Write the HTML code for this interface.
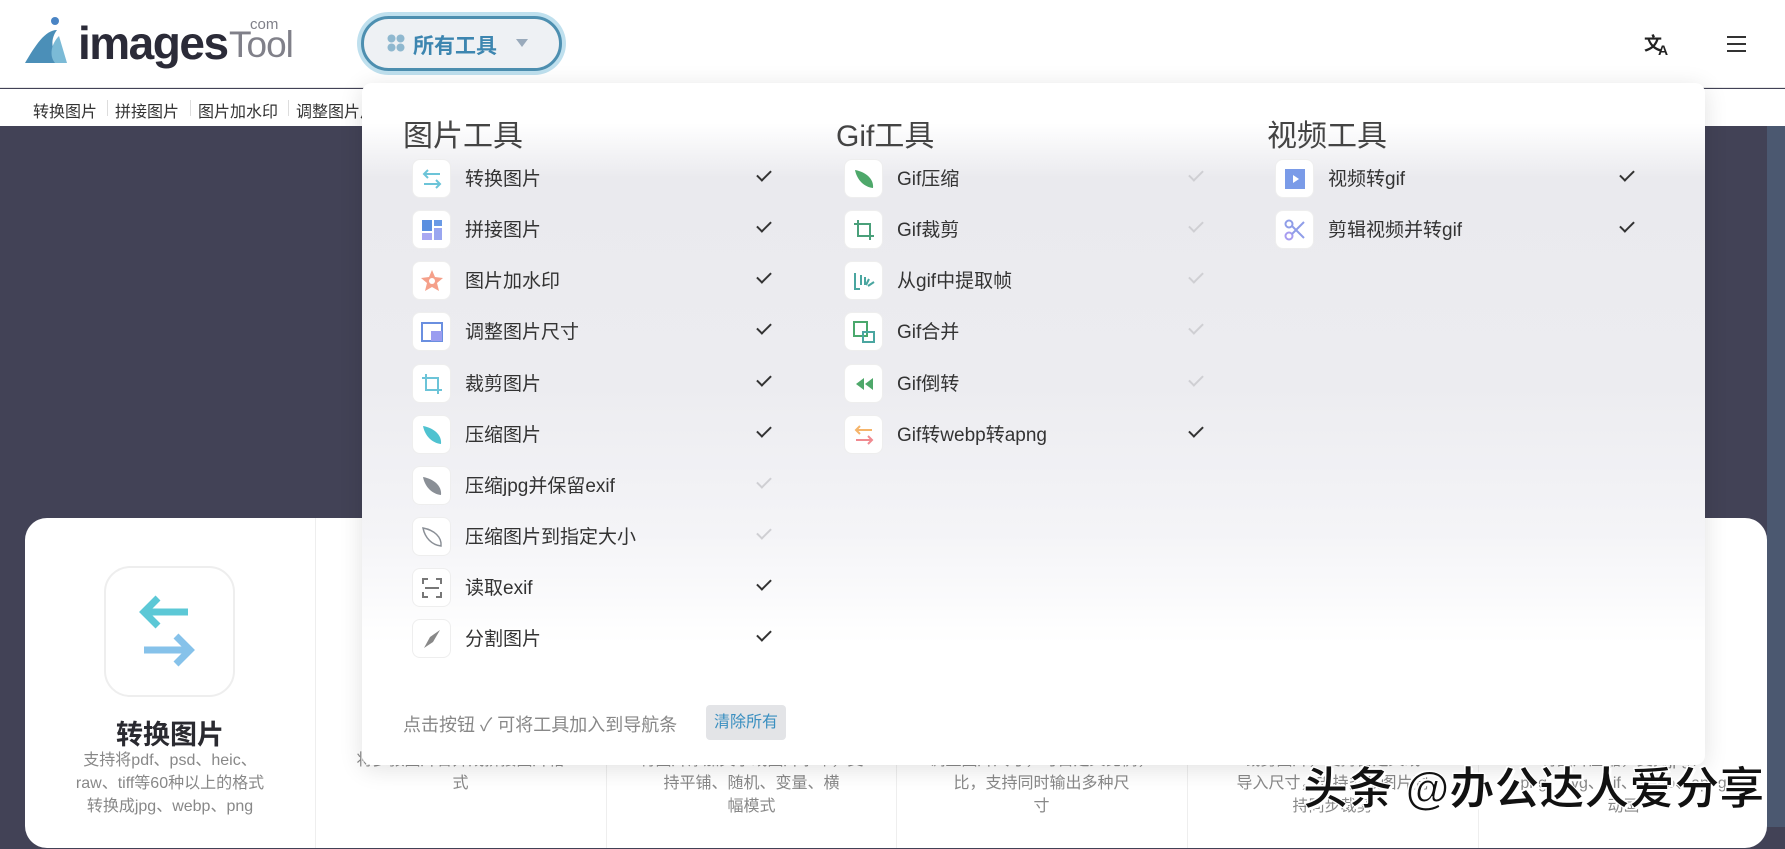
<!DOCTYPE html>
<html><head><meta charset="utf-8"><style>
*{margin:0;padding:0;box-sizing:border-box}
body{width:1785px;height:827px;overflow:hidden;position:relative;background:#424256;font-family:"Liberation Sans","Noto Sans CJK SC",sans-serif;color:#333}
.hdr{position:absolute;left:0;top:0;width:1785px;height:88px;background:#fff;border-bottom:1px solid #e6e6e6}
.sub{position:absolute;left:0;top:89px;width:1785px;height:37px;background:#fff;font-size:16px;color:#333}
.sub span{position:absolute;top:9px}
.sub i{position:absolute;top:11px;width:1px;height:16px;background:#ddd}
.btn{position:absolute;left:361px;top:16px;width:201px;height:55px;border-radius:28px;border:3px solid #4d8fb0;box-shadow:0 0 0 4px #bfe0ee;background:#eef1f4;color:#3d86b0;font-weight:bold;font-size:21px}
.card{position:absolute;left:25px;top:518px;width:1742px;height:330px;background:#fff;border-radius:22px}
.col{position:absolute;top:0;height:330px;width:291px;text-align:center;font-size:16px;color:#888;line-height:23px}
.panel{position:absolute;left:362px;top:83px;width:1343px;height:682px;border-radius:10px;background:linear-gradient(#fff 0,#fff 40px,#eaeaee 95px,#ececf0 300px,#f4f4f7 450px,#fff 560px);box-shadow:0 4px 24px rgba(0,0,0,.12)}
.h{position:absolute;top:28px;font-size:30px;color:#444;font-weight:normal}
.row{position:absolute;height:40px;width:400px}
.ib{position:absolute;left:0;top:0;width:39px;height:39px;background:#fff;border-radius:8px;border:1px solid #eee}
.ib svg{position:absolute;left:7px;top:7px}
.t{position:absolute;left:53px;top:5px;font-size:19px;color:#333;white-space:nowrap}
.ck{position:absolute;top:11px;left:345px;width:14px;height:8px;border-left:2px solid #333;border-bottom:2px solid #333;transform:rotate(-45deg)}
.ck.l{border-color:#cfcfd3}
</style></head><body>
<div class="hdr">
 <svg style="position:absolute;left:25px;top:16px" width="60" height="47" viewBox="0 0 60 47"><circle cx="30" cy="5" r="4" fill="#4a84c4"/><path d="M0 47 C10 30 20 14 32 14 C26 22 24 34 38 47Z" fill="#4b8fb8"/><path d="M30 47 C24 40 26 28 34 20 L42 47Z" fill="#7bbad6"/></svg>
 <div style="position:absolute;left:78px;top:16px;font-size:46px;font-weight:bold;color:#2b2b38;letter-spacing:-1.5px">images</div>
 <div style="position:absolute;left:229px;top:24px;font-size:37px;color:#808089;letter-spacing:-1px">Tool</div>
 <div style="position:absolute;left:250px;top:16px;font-size:15px;color:#808089">com</div>
 <div class="btn"><svg style="position:absolute;left:23px;top:15px" width="18" height="18"><circle cx="4.5" cy="4.5" r="4" fill="#8fb8cf"/><circle cx="13.5" cy="4.5" r="4" fill="#8fb8cf"/><circle cx="4.5" cy="13.5" r="4" fill="#8fb8cf"/><circle cx="13.5" cy="13.5" r="4" fill="#8fb8cf"/></svg><span style="position:absolute;left:49px;top:11px">所有工具</span><span style="position:absolute;left:152px;top:20px;border:6px solid transparent;border-top:8px solid #9ab;"></span></div>
 <div style="position:absolute;left:1644px;top:30px;font-size:18px;font-weight:bold;color:#222">文<span style="font-size:14px;position:relative;top:5px;left:-4px">A</span></div>
 <div style="position:absolute;left:1727px;top:36px;width:19px;height:2px;background:#333;box-shadow:0 7px 0 #333,0 14px 0 #333"></div>
</div>
<div class="sub"><span style="left:33px">转换图片</span><i style="left:107px"></i><span style="left:115px">拼接图片</span><i style="left:190px"></i><span style="left:198px">图片加水印</span><i style="left:288px"></i><span style="left:296px">调整图片尺寸</span></div>
<div style="position:absolute;left:1767px;top:126px;width:18px;height:701px;background:#4b5870"></div>
<div class="card">
 <div style="position:absolute;left:79px;top:48px;width:131px;height:131px;border:2px solid #eee;border-radius:26px">
  <svg width="131" height="131" viewBox="0 0 131 131"><path d="M40 44 H82 M52 30 L38 44 L52 58" stroke="#5cc8d6" stroke-width="7" fill="none"/><path d="M38 82 H84 M70 68 L84 82 L70 96" stroke="#86c2ea" stroke-width="7" fill="none"/></svg></div>
 <div style="position:absolute;left:0;width:290px;top:195px;text-align:center;font-size:27px;font-weight:bold;color:#2a2a30">转换图片</div>
 <div style="position:absolute;left:0;width:290px;top:231px;text-align:center;font-size:16px;color:#888;line-height:23px">支持将pdf、psd、heic、<br>raw、tiff等60种以上的格式<br>转换成jpg、webp、png</div>
 <div class="col" style="left:290px;top:231px;height:100px">将多张图片合并成拼接图片格<br>式</div>
 <div class="col" style="left:581px;top:231px;height:100px">将图片添加文字或图片水印，支<br>持平铺、随机、变量、横<br>幅模式</div>
 <div class="col" style="left:871px;top:231px;height:100px">调整图片尺寸，可自定义比例，<br>比，支持同时输出多种尺<br>寸</div>
 <div class="col" style="left:1162px;top:231px;height:100px">裁剪图片，支持自定义或<br>导入尺寸，支持多张图片同<br>持同步裁剪</div>
 <div class="col" style="left:1453px;top:231px;height:100px">将图片压缩，支持jpg、<br>png、svg、gif、webp、apng<br>动画</div>
 <div style="position:absolute;left:290px;top:0;width:1px;height:330px;background:#eee"></div>
 <div style="position:absolute;left:581px;top:0;width:1px;height:330px;background:#eee"></div>
 <div style="position:absolute;left:871px;top:0;width:1px;height:330px;background:#eee"></div>
 <div style="position:absolute;left:1162px;top:0;width:1px;height:330px;background:#eee"></div>
 <div style="position:absolute;left:1453px;top:0;width:1px;height:330px;background:#eee"></div>
</div>
<div class="panel">
 <div class="h" style="left:41px">图片工具</div>
 <div class="h" style="left:474px">Gif工具</div>
 <div class="h" style="left:905px">视频工具</div>

 <div class="row" style="left:50px;top:76px"><div class="ib"><svg width="24" height="24"><path d="M4 7H20M8 3L4 7L8 11M4 17H20M16 13L20 17L16 21" stroke="#6cc4d8" stroke-width="2" fill="none"/></svg></div><div class="t">转换图片</div><div class="ck"></div></div>
 <div class="row" style="left:50px;top:127px"><div class="ib"><svg width="24" height="24"><rect x="2" y="2" width="10" height="11" fill="#5a8fe0"/><rect x="14" y="2" width="8" height="6" fill="#6a9ae6"/><rect x="14" y="10" width="8" height="12" fill="#9aa6f0"/><rect x="2" y="15" width="10" height="7" fill="#a9a8f2"/></svg></div><div class="t">拼接图片</div><div class="ck"></div></div>
 <div class="row" style="left:50px;top:178px"><div class="ib"><svg width="24" height="24"><path d="M12 1L15 8L23 9L17 14L19 22L12 18L5 22L7 14L1 9L9 8Z" fill="#f5a08a"/><circle cx="12" cy="12" r="3" fill="#fff"/></svg></div><div class="t">图片加水印</div><div class="ck"></div></div>
 <div class="row" style="left:50px;top:229px"><div class="ib"><svg width="24" height="24"><rect x="2" y="3" width="20" height="18" stroke="#6a8fe0" stroke-width="2" fill="none"/><rect x="11" y="11" width="11" height="10" fill="#9b9df0"/></svg></div><div class="t">调整图片尺寸</div><div class="ck"></div></div>
 <div class="row" style="left:50px;top:281px"><div class="ib"><svg width="24" height="24"><path d="M6 2V18H22M2 6H18V22" stroke="#6cc4d8" stroke-width="2" fill="none"/></svg></div><div class="t">裁剪图片</div><div class="ck"></div></div>
 <div class="row" style="left:50px;top:332px"><div class="ib"><svg width="24" height="24"><path d="M3 3C14 5 22 12 21 21C12 20 5 13 3 3Z" fill="#4fc2d0"/></svg></div><div class="t">压缩图片</div><div class="ck"></div></div>
 <div class="row" style="left:50px;top:383px"><div class="ib"><svg width="24" height="24"><path d="M3 3C14 5 22 12 21 21C12 20 5 13 3 3Z" fill="#8a8f96"/></svg></div><div class="t">压缩jpg并保留exif</div><div class="ck l"></div></div>
 <div class="row" style="left:50px;top:434px"><div class="ib"><svg width="24" height="24"><path d="M3 3C14 5 22 12 21 21C12 20 5 13 3 3Z" stroke="#8a8f96" stroke-width="1.5" fill="none"/></svg></div><div class="t">压缩图片到指定大小</div><div class="ck l"></div></div>
 <div class="row" style="left:50px;top:485px"><div class="ib"><svg width="24" height="24"><path d="M3 8V3H8M16 3H21V8M3 16V21H8M16 21H21V16M5 12H19" stroke="#777" stroke-width="2" fill="none"/></svg></div><div class="t">读取exif</div><div class="ck"></div></div>
 <div class="row" style="left:50px;top:536px"><div class="ib"><svg width="24" height="24"><path d="M4 21L10 10L20 3L13 15Z" fill="#888"/></svg></div><div class="t">分割图片</div><div class="ck"></div></div>

 <div class="row" style="left:482px;top:76px"><div class="ib"><svg width="24" height="24"><path d="M3 3C14 5 22 12 21 21C12 20 5 13 3 3Z" fill="#4ea86a"/></svg></div><div class="t">Gif压缩</div><div class="ck l"></div></div>
 <div class="row" style="left:482px;top:127px"><div class="ib"><svg width="24" height="24"><path d="M6 2V18H22M2 6H18V22" stroke="#4aa07a" stroke-width="2" fill="none"/></svg></div><div class="t">Gif裁剪</div><div class="ck l"></div></div>
 <div class="row" style="left:482px;top:178px"><div class="ib"><svg width="24" height="24"><path d="M3 4V20H8M9 6V16M13 8V16M17 10L14 16M22 13L16 17" stroke="#4aa6a0" stroke-width="2" fill="none"/></svg></div><div class="t">从gif中提取帧</div><div class="ck l"></div></div>
 <div class="row" style="left:482px;top:229px"><div class="ib"><svg width="24" height="24"><rect x="2" y="2" width="13" height="14" stroke="#4aa86c" stroke-width="2" fill="none"/><rect x="11" y="12" width="11" height="10" stroke="#4aa6a0" stroke-width="2" fill="none"/></svg></div><div class="t">Gif合并</div><div class="ck l"></div></div>
 <div class="row" style="left:482px;top:281px"><div class="ib"><svg width="24" height="24"><path d="M12 6L4 12L12 18ZM21 6L13 12L21 18Z" fill="#4ea86a"/></svg></div><div class="t">Gif倒转</div><div class="ck l"></div></div>
 <div class="row" style="left:482px;top:332px"><div class="ib"><svg width="24" height="24"><path d="M4 7H20M8 3L4 7L8 11" stroke="#f5b46a" stroke-width="2" fill="none"/><path d="M4 17H20M16 13L20 17L16 21" stroke="#f08a90" stroke-width="2" fill="none"/></svg></div><div class="t">Gif转webp转apng</div><div class="ck"></div></div>

 <div class="row" style="left:913px;top:76px"><div class="ib"><svg width="24" height="24"><rect x="2" y="2" width="20" height="20" fill="#7a9be8"/><path d="M10 8L16 12L10 16Z" fill="#fff"/></svg></div><div class="t">视频转gif</div><div class="ck"></div></div>
 <div class="row" style="left:913px;top:127px"><div class="ib"><svg width="24" height="24"><circle cx="6" cy="6" r="3.5" stroke="#8f9de8" stroke-width="2" fill="none"/><circle cx="6" cy="18" r="3.5" stroke="#a79cf0" stroke-width="2" fill="none"/><path d="M9 8L21 20M9 16L21 4" stroke="#8f9de8" stroke-width="2"/></svg></div><div class="t">剪辑视频并转gif</div><div class="ck"></div></div>

 <div style="position:absolute;left:41px;top:628px;font-size:18px;color:#888">点击按钮 ✓ 可将工具加入到导航条</div>
 <div style="position:absolute;left:344px;top:622px;width:80px;height:35px;background:#e3e4e7;border-radius:4px;font-size:16px;color:#3a8fc0;text-align:center;line-height:35px">清除所有</div>
</div>
<div style="position:absolute;left:1303px;top:752px;font-size:45px;font-weight:bold;color:#111;-webkit-text-stroke:1px #fff;text-shadow:2px 2px 0 #fff,-1px -1px 0 #fff;white-space:nowrap">头条 @办公达人爱分享</div>
</body></html>
